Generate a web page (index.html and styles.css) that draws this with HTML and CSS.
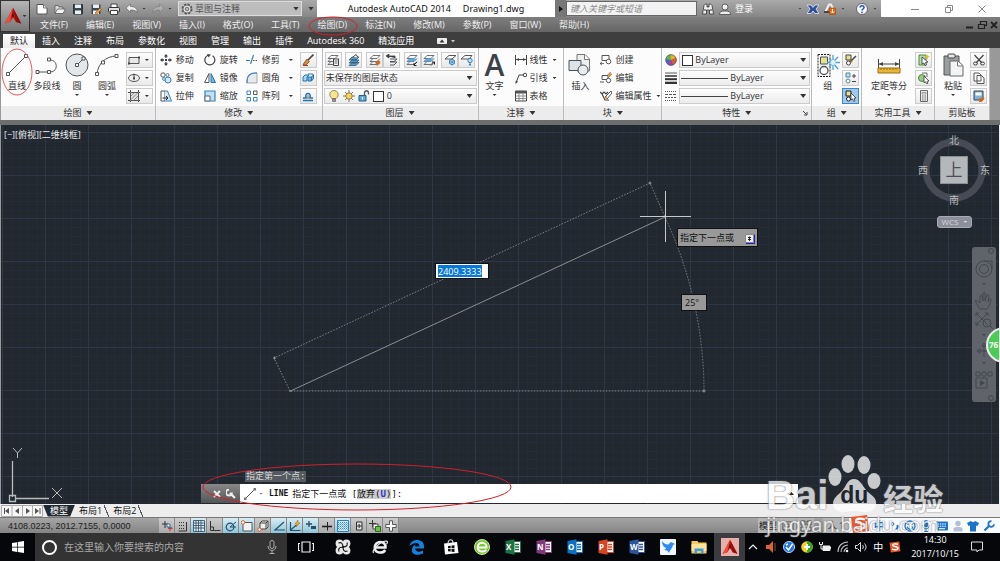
FILE: index.html
```html
<!DOCTYPE html>
<html lang="zh-CN">
<head>
<meta charset="utf-8">
<title>Autodesk AutoCAD 2014 - Drawing1.dwg</title>
<link rel="stylesheet" href="styles.css">
</head>
<body>
<svg class="defs" aria-hidden="true">
  <symbol id="doc" viewBox="0 0 12 12"><path d="M1 1.500h6.500l3.500 3.500v6h-10z" fill="#fff" stroke="#555"/><path d="M7.500 1.500v3.500h3.500" fill="#ddd" stroke="#777"/></symbol>
  <symbol id="folder" viewBox="0 0 12 12"><path d="M1 10V2.500h3l1 1.500h4v2" fill="#ddd" stroke="#555" stroke-width=".8"/><path d="M1 10.500l2.500-4.500h8l-2.500 4.500z" fill="#f4f4f4" stroke="#555" stroke-width=".8"/></symbol>
  <symbol id="disk" viewBox="0 0 12 12"><path d="M1.500 1.500h9v9.500h-9z" fill="#3c4650" stroke="#2c333b"/><path d="M3 1.500h6v3.500h-6zM3 7.500h6v3.500h-6z" fill="#eceff2"/></symbol>
  <symbol id="disk2" viewBox="0 0 12 12"><path d="M1.500 1.500h9v9.500h-9z" fill="#3c4650"/><path d="M3 1.500h6v3.500h-6zM3 7.500h6v3.500h-6z" fill="#eceff2"/><path d="M5 10l5-5 1.500 1.500-5 5z" fill="#f0a33c" stroke="#7a4a14" stroke-width=".5"/></symbol>
  <symbol id="print" viewBox="0 0 12 12"><path d="M3 1h6v4h-6z" fill="#fff" stroke="#444"/><rect x=".5" y="4.500" width="11" height="4.500" rx="1" fill="#ddd" stroke="#333"/><path d="M2.500 7.500h7v4h-7z" fill="#fff" stroke="#444"/></symbol>
  <symbol id="undo" viewBox="0 0 12 12"><path d="M0 5l4.500-4v2.500c4 0 7 2 7 6-1.500-2-4-2.500-7-2.500v2.500z" fill="#eee" stroke="#555" stroke-width=".6"/></symbol>
  <symbol id="redo" viewBox="0 0 12 12"><path d="M12 5l-4.500-4v2.500c-4 0-7 2-7 6 1.500-2 4-2.500 7-2.500v2.500z" fill="#adadad" stroke="#777" stroke-width=".6"/></symbol>
  <symbol id="gear" viewBox="0 0 12 12"><circle cx="6" cy="6" r="4.800" fill="none" stroke="#555" stroke-width="1.400" stroke-dasharray="2.300 1.470"/><circle cx="6" cy="6" r="4" fill="#e8e8e8" stroke="#555" stroke-width=".8"/><circle cx="6" cy="6" r="1.800" fill="#bbb" stroke="#555" stroke-width=".8"/></symbol>
  <symbol id="binoc" viewBox="0 0 12 12"><path d="M2 2.500l1.500-1.500h1.500v3h2v-3h1.500l1.500 1.500 1.500 8.500h-4v-4h-3v4h-4z" fill="#eee" stroke="#333" stroke-width=".8"/><path d="M2 7h2M8 7h2" stroke="#333"/></symbol>
  <symbol id="user" viewBox="0 0 12 12"><circle cx="6" cy="4" r="3" fill="#eee" stroke="#444" stroke-width=".8"/><path d="M.5 11.500c0-3 2-3.500 5.500-3.500s5.500.5 5.500 3.500z" fill="#eee" stroke="#444" stroke-width=".8"/></symbol>
  <symbol id="exch" viewBox="0 0 12 12"><path d="M0 2h4l2 2.500 2-2.500h4l-3 4 3 4.500h-4l-2-2.500-2 2.500h-4l3-4.500z" fill="#2c4f9a" stroke="#e9edf6" stroke-width=".8"/></symbol>
  <symbol id="a360" viewBox="0 0 12 12"><path d="M1 9.500l4-8h2l2 4" fill="none" stroke="#eee" stroke-width="2"/><path d="M0 9h6" stroke="#445" stroke-width="2"/><rect x="5.500" y="5" width="6" height="6.500" fill="#e26a13" stroke="#a84605" stroke-width=".6"/><path d="M8.500 6v4M7 8.500l1.500 1.500 1.500-1.500" stroke="#fff" fill="none"/></symbol>
  <symbol id="help" viewBox="0 0 12 12"><circle cx="6" cy="6" r="5.500" fill="#f5f7fb" stroke="#444" stroke-width=".7"/><path d="M4 4.500c.1-2.500 4-2.500 4 0 0 1.500-2 1.500-2 3" fill="none" stroke="#2455b5" stroke-width="1.500"/><circle cx="6" cy="9.300" r=".9" fill="#2455b5"/></symbol>

  <symbol id="line" viewBox="0 0 24 24"><path d="M3 21L21 3" stroke="#555"/><path d="M1.500 19.500h3v3h-3zM19.500 1.500h3v3h-3z" fill="#fff" stroke="#555"/></symbol>
  <symbol id="pline" viewBox="0 0 24 24"><path d="M2 19h13c9 0 8-13-1-12" fill="none" stroke="#555"/><path d="M1 17.500h3v3h-3zM12.500 17.500h3v3h-3zM12.500 5h3v3h-3z" fill="#fff" stroke="#555"/></symbol>
  <symbol id="circle" viewBox="0 0 24 24"><circle cx="12" cy="12" r="11" fill="#e4e7ea" stroke="#555"/><path d="M12 12l6-6" stroke="#555"/><path d="M10.500 10.500h3v3h-3zM17 4h3v3h-3z" fill="#fff" stroke="#555"/></symbol>
  <symbol id="arc" viewBox="0 0 24 24"><path d="M2 21C3 11 10 3 22 3" fill="none" stroke="#555"/><path d="M.5 19.500h3v3h-3zM6.500 8h3v3h-3zM20 1.500h3v3h-3z" fill="#fff" stroke="#555"/></symbol>
  <symbol id="rect" viewBox="0 0 12 12"><path d="M1 3.500h10v6h-10z" fill="#e8e8e8" stroke="#555"/><path d="M0 8.500h2v2h-2zM10 2.500h2v2h-2z" fill="#444"/></symbol>
  <symbol id="ellipse" viewBox="0 0 12 12"><ellipse cx="6" cy="6" rx="5.500" ry="3.500" fill="#eee" stroke="#555"/><path d="M6 1.500v4.500" stroke="#444"/><path d="M5 5.500h2v2h-2z" fill="#444"/></symbol>
  <symbol id="hatch" viewBox="0 0 12 12"><path d="M2.500 2.500h8v8h-8z" fill="#e2e2e2" stroke="#555"/><path d="M3 6l3-3M3 9.500l6.500-6.500M6 10l4-4" stroke="#777" stroke-width=".8"/><path d="M0 2.500h2M11 10.500h1M2.500 0v2M10.500 0v2M0 10.500h2M11 2.500h1M2.500 11v1M10.500 11v1" stroke="#444"/></symbol>

  <symbol id="move" viewBox="0 0 12 12"><path d="M6 1v3M6 8v3M1 6h3M8 6h3" stroke="#3a3f45" stroke-width="1.300"/><path d="M6 0l2 2.500h-4zM6 12l2-2.500h-4zM0 6l2.500-2v4zM12 6l-2.500-2v4zM5 5h2v2h-2z" fill="#3a3f45"/></symbol>
  <symbol id="rotate" viewBox="0 0 12 12"><path d="M4 1.300A5 5 0 1 0 8.500 1.700" fill="none" stroke="#444" stroke-width="1.200"/><path d="M3 0l4 .5-2.500 3z" fill="#444"/></symbol>
  <symbol id="trim" viewBox="0 0 12 12"><path d="M0 6.500h4M4.500 10l3-9" stroke="#3883bd" stroke-width="1.200"/><path d="M7 6.500h5" stroke="#555" stroke-dasharray="1.500 1"/></symbol>
  <symbol id="copy" viewBox="0 0 12 12"><circle cx="3" cy="3" r="2.200" fill="#fff" stroke="#555"/><circle cx="7.500" cy="3" r="1.500" fill="#fff" stroke="#777"/><circle cx="8" cy="8" r="3" fill="#d4eaf8" stroke="#3883bd"/><circle cx="4" cy="7" r="1.400" fill="#fff" stroke="#3883bd"/></symbol>
  <symbol id="mirror" viewBox="0 0 12 12"><path d="M5 1.500v9h-4.500z" fill="#fff" stroke="#555"/><path d="M7 1.500v9h4.500z" fill="#74b4e2" stroke="#2b77b3"/></symbol>
  <symbol id="fillet" viewBox="0 0 12 12"><path d="M1 11V9C1 4 4 1 9 1h2v10z" fill="#e7eaed" stroke="#888" stroke-width=".7"/><path d="M1 11V9C1 4 4 1 9 1h2" fill="none" stroke="#3883bd" stroke-width="1.200"/></symbol>
  <symbol id="stretch" viewBox="0 0 12 12"><path d="M1 1h4v10h-4z" fill="#fff" stroke="#555"/><path d="M5 1h2.500l4 10h-6.500" fill="#cfe7f7" stroke="#3883bd"/><path d="M2.500 8h5M6 6l2 2-2 2" stroke="#222" fill="none"/></symbol>
  <symbol id="scale" viewBox="0 0 12 12"><path d="M1 1h10v10h-10z" fill="#bfe0f5" stroke="#3883bd" stroke-width="1.200"/><path d="M1 6h5v5h-5z" fill="#fff" stroke="#666"/></symbol>
  <symbol id="array" viewBox="0 0 12 12"><path d="M1 1h3.500v3.500h-3.500zM1 7.500h3.500v3.500h-3.500zM7.500 7.500h3.500v3.500h-3.500z" fill="#fff" stroke="#3883bd"/><path d="M7.500 1h3.500v3.500h-3.500z" fill="#fff" stroke="#555"/></symbol>
  <symbol id="brush" viewBox="0 0 12 12"><path d="M11.500 .5L6 6" stroke="#444" stroke-width="1.600"/><path d="M5 5l2.500 2.500-3.500 3.500-3-.5z" fill="#d98a33" stroke="#7b3d12" stroke-width=".7"/><path d="M1 11.500h5" stroke="#a33"/></symbol>
  <symbol id="explode" viewBox="0 0 12 12"><path d="M1 5l2-2h4l-2 2v4h-4z" fill="#a9d6f3" stroke="#2474ad"/><path d="M6 5h3.500v4h-3.500zM9.500 5l2-2.500v4l-2 2.500M6 2h5" fill="#74b4e2" stroke="#2474ad"/></symbol>
  <symbol id="offset" viewBox="0 0 12 12"><path d="M1 10.500h10M1 8h3c-2-6 6-6 4 0h3" fill="none" stroke="#2474ad" stroke-width="1.400"/><path d="M5 8c-1-3 3-3 2 0z" fill="#fff" stroke="#444" stroke-width=".7"/></symbol>

  <symbol id="lay" viewBox="0 0 12 12"><path d="M1 4.500l3-3h7l-3 3zM1 7.500l3-3M1 7.500h7l3-3M1 10.500l3-3M1 10.500h7l3-3" fill="none" stroke="#4c535a" stroke-width=".8"/></symbol>
  <symbol id="lay-list" viewBox="0 0 12 12"><use href="#lay"/><path d="M6.500 5h5v6.500h-5z" fill="#fff" stroke="#444"/><path d="M7.500 7h3M7.500 9h3" stroke="#555"/></symbol>
  <symbol id="lay-blue" viewBox="0 0 12 12"><path d="M1 6l3-3h7l-3 3zM1 9l3-3h7l-3 3zM1 11.500l3-3h7l-3 3z" fill="#4e9fd6" stroke="#30475a" stroke-width=".7"/><path d="M5 3l3-2.500 2 3" fill="#fff" stroke="#444"/></symbol>
  <symbol id="lay-brush" viewBox="0 0 12 12"><use href="#lay"/><path d="M6 8l4-2 1.500 3-3.500 3z" fill="#c96d22"/></symbol>
  <symbol id="lay-prev" viewBox="0 0 12 12"><path d="M4 5h7l-3 2.500h-4M4 8h7l-3 3h-4" fill="none" stroke="#4c535a"/><path d="M1 2h8v2M0 2l3-2v4z" fill="#333" stroke="#444" stroke-width=".8"/></symbol>
  <symbol id="lay-iso" viewBox="0 0 12 12"><use href="#lay"/><path d="M1 7.500h7l3-3h-7z" fill="#5aaae0"/><path d="M11 8l-3 3M8 9v2.500h2.500" stroke="#222" fill="none"/></symbol>
  <symbol id="lay-uniso" viewBox="0 0 12 12"><use href="#lay"/><path d="M1 7.500h7l3-3h-7z" fill="#5aaae0"/><path d="M8 11.500l3-3M9 8h2.500v2.500" stroke="#222" fill="none"/></symbol>
  <symbol id="lay-freeze" viewBox="0 0 12 12"><path d="M1 5l4-3.500h7l-4 3.500z" fill="#fff" stroke="#555"/><circle cx="8" cy="8" r="2.600" fill="#d8edfa" stroke="#3883bd"/><path d="M8 4.500v7M5 6.500l6 3M5 9.500l6-3" stroke="#3883bd" stroke-width=".7"/></symbol>
  <symbol id="lay-off" viewBox="0 0 12 12"><path d="M0 5l4-3.500h7l-3 3.500z" fill="#fff" stroke="#555"/><circle cx="9" cy="6.500" r="2.200" fill="#b9dff7" stroke="#3883bd"/><path d="M8 9.500h2v2h-2z" fill="#3883bd"/></symbol>
  <symbol id="bulb" viewBox="0 0 12 12"><path d="M4 8.500c-4-3-2-8 2-8s6 5 2 8z" fill="#f7e68a" stroke="#77704a" stroke-width=".8"/><path d="M4.500 9h3v2.500h-3z" fill="#999" stroke="#555" stroke-width=".6"/></symbol>
  <symbol id="sun" viewBox="0 0 12 12"><path d="M6 0v12M0 6h12M2 2l8 8M2 10l8-8" stroke="#555" stroke-width=".8"/><circle cx="6" cy="6" r="3.200" fill="#f7d45a" stroke="#8a6a22" stroke-width=".8"/></symbol>
  <symbol id="lock" viewBox="0 0 12 12"><path d="M1 5.500h7v5.500h-7z" fill="#5aa9d8" stroke="#265f87"/><path d="M6.500 5.500v-2.500c0-3 4-3 4 0v1.500" fill="none" stroke="#555" stroke-width="1.300"/><path d="M4.500 7v2.500" stroke="#fff"/></symbol>

  <symbol id="linear" viewBox="0 0 12 12"><path d="M.5 1v10M11.500 1v10M1 5.500h10" stroke="#444"/><path d="M1 5.500l3-1.500v3zM11 5.500l-3-1.500v3z" fill="#444"/></symbol>
  <symbol id="leader" viewBox="0 0 12 12"><path d="M1 11l3-8h5" fill="none" stroke="#444"/><path d="M.5 12l.3-3.500 2.300 1z" fill="#444"/><circle cx="10" cy="3" r="1.800" fill="#fff" stroke="#444"/></symbol>
  <symbol id="table" viewBox="0 0 12 12"><path d="M.5 1h11v10h-11z" fill="#fff" stroke="#444"/><path d="M.5 1h11v2.500h-11z" fill="#555"/><path d="M.5 6h11M.5 8.500h11M4 3.500v7.500M8 3.500v7.500" stroke="#777" stroke-width=".8"/></symbol>
  <symbol id="insert" viewBox="0 0 24 24"><path d="M9 1.500h8l4.500 4.500v12h-12.500z" fill="#eceef0" stroke="#777"/><path d="M16.500 2v4.500h5" fill="#fff" stroke="#777"/><path d="M1 7.500h12v10h-12z" fill="#dde3e8" stroke="#4b5258"/><circle cx="15" cy="17" r="5" fill="#e9edf0" stroke="#4b5258"/></symbol>
  <symbol id="create" viewBox="0 0 12 12"><path d="M2 1.500h7v5h-7z" fill="#fff" stroke="#555"/><circle cx="8.500" cy="7.500" r="2.300" fill="#fff" stroke="#555"/><path d="M0 9.500h4M2 8l-2 1.500 2 1.500" fill="none" stroke="#555" stroke-width=".8"/></symbol>
  <symbol id="edit" viewBox="0 0 12 12"><path d="M2 3.500h6v4h-6z" fill="#fff" stroke="#555"/><circle cx="8.500" cy="8.500" r="2.200" fill="#fff" stroke="#555"/><path d="M0 10h4" stroke="#555"/><path d="M10.500 0l-3 3h2l-1 2.500 3.500-3.500h-2z" fill="#f2a63b" stroke="#a85d0c" stroke-width=".5"/></symbol>
  <symbol id="attr" viewBox="0 0 12 12"><path d="M0 2l2 2 2-2 2 2 2-2M2 4l3 6h4" fill="none" stroke="#444" stroke-width="1.200"/><path d="M5 7l6-6 1 2-5 6z" fill="#fff" stroke="#555"/><path d="M4 8l3-2v3z" fill="#e6952e"/></symbol>
  <symbol id="wheel" viewBox="0 0 12 12"><circle cx="6" cy="6" r="5.500" fill="#3a6fd0"/><path d="M6 6V.5A5.500 5.500 0 0 1 11 4z" fill="#f0b02c"/><path d="M6 6L11 4A5.500 5.500 0 0 1 8 11z" fill="#e05a2a"/><path d="M6 6l2 5a5.500 5.500 0 0 1-6-1.500z" fill="#9c45a8"/><path d="M6 6V.5A5.500 5.500 0 0 0 .8 5z" fill="#63b848"/><circle cx="6" cy="6" r="5.300" fill="none" stroke="#555" stroke-width=".6"/></symbol>
  <symbol id="weights" viewBox="0 0 12 12"><path d="M0 1h12" stroke="#333" stroke-width=".8"/><path d="M0 4h12" stroke="#333" stroke-width="1.500"/><path d="M0 7.200h12" stroke="#333" stroke-width="2"/><path d="M0 11h12" stroke="#333" stroke-width="2.600"/></symbol>
  <symbol id="dashes" viewBox="0 0 12 12"><path d="M0 1.500h12" stroke="#555" stroke-dasharray="1 1"/><path d="M0 4.500h12" stroke="#555" stroke-dasharray="3 1"/><path d="M0 7.500h12" stroke="#555" stroke-dasharray="2 1"/><path d="M0 10.500h12" stroke="#555" stroke-dasharray="1 1"/></symbol>
  <symbol id="group" viewBox="0 0 24 24"><path d="M2 1.500h12v22h-12z" fill="#f6f6f6" stroke="#222" stroke-dasharray="2 1"/><path d="M4.500 4h7v7h-7z" fill="#e9e28d" stroke="#4b5258"/><circle cx="8" cy="17.500" r="4" fill="#fff" stroke="#4b5258" stroke-width="1.300"/><path d="M17 2v5M17 12v5M11 9.500h4M19 9.500h5M13 5l3 3M18 11l4 5M13 14l3-3M18 8l4-4" stroke="#4b9fda" stroke-width="1.300"/><circle cx="17" cy="9.500" r="2.500" fill="#d9f0ff"/></symbol>
  <symbol id="gr-edit" viewBox="0 0 12 12"><path d="M1 1h5v5h-5z" fill="#e9e28d" stroke="#444"/><circle cx="3.500" cy="9" r="2" fill="#fff" stroke="#444"/><path d="M5 8l6-6" stroke="#444" stroke-width="1.500"/><path d="M4.500 9l2-2.500 1.500 1.500z" fill="#d77a20"/></symbol>
  <symbol id="gr-add" viewBox="0 0 12 12"><path d="M1 1h4v4h-4z" fill="#bde0f6" stroke="#589"/><circle cx="3" cy="9" r="2" fill="#fff" stroke="#589"/><path d="M7 4h4M9 2v4M7 9.500h4" stroke="#444"/></symbol>
  <symbol id="gr-sel" viewBox="0 0 12 12"><path d="M1 1h5v5h-5z" fill="#e9e28d" stroke="#222"/><circle cx="3.500" cy="9" r="2" fill="#fff" stroke="#222"/><path d="M6 3l5 5-2 .3 1 2.500-1.500.5-1-2.500-1.500 1.200z" fill="#fff" stroke="#222" stroke-width=".7"/></symbol>
  <symbol id="measure" viewBox="0 0 24 24"><path d="M1.500 6v10M22.500 6v10M2 11h20" stroke="#444"/><path d="M2 11l4-2v4zM22 11l-4-2v4z" fill="#444"/><path d="M1 15h22v5h-22z" fill="#e9b53a" stroke="#9b6c11"/><path d="M4 15v2M7 15v2M10 15v2M13 15v2M16 15v2M19 15v2" stroke="#9b6c11"/></symbol>
  <symbol id="u-sel" viewBox="0 0 12 12"><path d="M1 1h7v10h-7z" fill="#b9dca8" stroke="#4c8a38"/><path d="M4 3l6 5-2.500.5 1 2.500-1.500.5-1-2.500-2 1z" fill="#fff" stroke="#333" stroke-width=".8"/><path d="M9 0l1 2 2 .5-2 1-.5 2-1-2-2-1 2-.5z" fill="#f2b32f"/></symbol>
  <symbol id="u-all" viewBox="0 0 12 12"><circle cx="4" cy="6" r="3.500" fill="#9ccb88" stroke="#4c8a38"/><path d="M4 1h5v4" fill="#fff" stroke="#666"/><path d="M6 4l5 5-2 .3 1 2-1.500.5-1-2-1.500 1z" fill="#fff" stroke="#333" stroke-width=".8"/></symbol>
  <symbol id="calc" viewBox="0 0 12 12"><path d="M2.500 .5h7v11h-7z" fill="#eee" stroke="#666"/><path d="M4 2.500h4v1.500h-4z" fill="#fff" stroke="#666" stroke-width=".6"/><path d="M4 6h4M4 8h4M4 10h4" stroke="#666" stroke-dasharray="1 .5"/></symbol>
  <symbol id="paste" viewBox="0 0 24 24"><path d="M3 3h15v19h-15z" fill="#9a9da0" stroke="#555"/><rect x="7" y="1" width="7" height="4" rx="1" fill="#e5e7e9" stroke="#444"/><path d="M9 8h8l5 4.500v10.500h-13z" fill="#f2f3f4" stroke="#666"/><path d="M16.500 8.500v4.500h5" fill="#fff" stroke="#777"/></symbol>
  <symbol id="cut" viewBox="0 0 12 12"><path d="M1.500 1l7.500 8M10.500 1l-7.500 8" stroke="#444" stroke-width="1.200"/><ellipse cx="2.500" cy="9.500" rx="2" ry="1.500" fill="none" stroke="#444"/><ellipse cx="9.500" cy="9.500" rx="2" ry="1.500" fill="none" stroke="#444"/></symbol>
  <symbol id="copyclip" viewBox="0 0 12 12"><path d="M1 1h5l2 2v6h-7zM4 3.500h4.500l2.500 2.500v5.500h-7z" fill="#fff" stroke="#555"/></symbol>
  <symbol id="match" viewBox="0 0 12 12"><path d="M1 1h9v9h-9z" fill="#7fb4da" stroke="#345"/><path d="M2.500 2.500h6v3h-6z" fill="#fff"/><path d="M6 9l4-2.500 1.500 2-3 3.500h-2.500z" fill="#c96d22"/></symbol>

  <symbol id="s-infer" viewBox="0 0 12 12"><path d="M1 4h6M4 1v7M7 8h4" stroke="#333"/><path d="M6 4h3v3h-3z" fill="#fff" stroke="#2b6ea5"/><path d="M9 7v4M7.500 8.500h4" stroke="#c33"/></symbol>
  <symbol id="s-snap" viewBox="0 0 12 12"><path d="M2 2.500h5M2 5.500h5M2 8.500h5" stroke="#333" stroke-dasharray="1 1"/><path d="M9.500 2v9h-8" fill="none" stroke="#333"/></symbol>
  <symbol id="s-grid" viewBox="0 0 12 12"><path d="M.5 .5h11v11h-11z" fill="#dbe9f0"/><path d="M.5 .5h11v11h-11zM3 0v12M5.500 0v12M8 0v12M0 3h12M0 5.500h12M0 8h12" fill="none" stroke="#2f4860" stroke-width=".8"/></symbol>
  <symbol id="s-ortho" viewBox="0 0 12 12"><path d="M1.500 1v9.500h10M1.500 7h3v3" fill="none" stroke="#333"/></symbol>
  <symbol id="s-polar" viewBox="0 0 12 12"><circle cx="5" cy="7" r="3.800" fill="none" stroke="#24506e" stroke-width="1.200"/><path d="M5 7l6-5M5 7h6" stroke="#24506e"/></symbol>
  <symbol id="s-osnap" viewBox="0 0 12 12"><path d="M2 2.500h9v8.500h-9z" fill="#f2f2f2" stroke="#555"/><circle cx="2" cy="2.500" r="1.800" fill="#fff" stroke="#e0592e"/></symbol>
  <symbol id="s-3d" viewBox="0 0 12 12"><path d="M3 3l2-2h6v6l-2 2h-6z" fill="#eee" stroke="#444"/><path d="M3 3h6v6M9 3l2-2" fill="none" stroke="#444"/><circle cx="2.500" cy="9.500" r="1.600" fill="#fff" stroke="#e0592e"/></symbol>
  <symbol id="s-otrack" viewBox="0 0 12 12"><path d="M11 2L2 10h10" fill="none" stroke="#24506e" stroke-width="1.200"/></symbol>
  <symbol id="s-ducs" viewBox="0 0 12 12"><path d="M1.500 2v8.500h10M1.500 10l6-5" stroke="#24506e" fill="none" stroke-width="1.200"/><path d="M9 0l-3 4h2l-1 3 4-4h-2z" fill="#f2b32f" stroke="#a85d0c" stroke-width=".5"/></symbol>
  <symbol id="s-dyn" viewBox="0 0 12 12"><path d="M1 4h6M4 1v6" stroke="#24506e" stroke-width="1.300"/><path d="M6 6h5v3h-5z" fill="#24506e"/></symbol>
  <symbol id="s-lwt" viewBox="0 0 12 12"><path d="M1 6.500h10" stroke="#222" stroke-width="1.600"/><path d="M6.500 2v8.500" stroke="#222"/></symbol>
  <symbol id="s-tpy" viewBox="0 0 12 12"><path d="M.5 .5h11v11h-11z" fill="#cfe6f6" stroke="#2b7dbd"/><path d="M1 2.500h10M1 4.500h10M1 6.500h10M1 8.500h10" stroke="#3d8fc9" stroke-dasharray="1 1"/><path d="M2 3.500h9M2 5.500h9M2 7.500h9M2 9.500h9" stroke="#7fb6df" stroke-dasharray="1 1"/></symbol>
  <symbol id="s-qp" viewBox="0 0 12 12"><path d="M3.500 2h5.500v8h-5.500zM3.500 6h5.500M6.200 4v4" fill="#ddd" stroke="#333"/></symbol>
  <symbol id="s-sc" viewBox="0 0 12 12"><path d="M0 3.500h7M3.500 0v7" stroke="#333"/><path d="M4 4h5v5h-5z" fill="#eee" stroke="#444"/><path d="M6.500 6.500h5v5h-5z" fill="#6bbf4a" stroke="#2e6d1a"/></symbol>
  <symbol id="s-am" viewBox="0 0 12 12"><path d="M4.500 .8h3v3.700h3.700v3h-3.700v3.700h-3v-3.700h-3.700v-3h3.700z" fill="#fff" stroke="#555"/></symbol>

  <symbol id="win" viewBox="0 0 16 16"><path d="M2 4l5-.8v4.500h-5zM7.700 3l6.300-1v5.700h-6.300zM2 8.400h5v4.500l-5-.8zM7.700 8.400h6.300v5.700l-6.300-1z" fill="#fff"/></symbol>
  <symbol id="mic" viewBox="0 0 16 16"><rect x="6" y="1.500" width="4" height="8" rx="2" fill="none" stroke="#aaa"/><path d="M4 7c0 6 8 6 8 0M8 11.500v3M5.500 14.500h5" fill="none" stroke="#aaa"/></symbol>
  <symbol id="tview" viewBox="0 0 16 16"><path d="M4 3h8v10h-8zM2 4.500h-1.500v7h1.500M14 4.500h1.500v7h-1.500" fill="none" stroke="#eee" stroke-width="1.200"/></symbol>
  <symbol id="pin4" viewBox="0 0 16 16"><g fill="#e8e8e8"><circle cx="4.500" cy="4.500" r="3.900"/><circle cx="11.500" cy="4.500" r="3.900"/><circle cx="4.500" cy="11.500" r="3.900"/><circle cx="11.500" cy="11.500" r="3.900"/></g><path d="M8 8C8 4 6 3 3.500 4M8 8c4 0 5-2 4-4.500M8 8c0 4 2 5 4.500 4M8 8c-4 0-5 2-4 4.500" fill="none" stroke="#111" stroke-width="1.100"/></symbol>
  <symbol id="ie" viewBox="0 0 16 16"><path d="M2.500 8.500h11C14 1 2.500 1 2.800 8.700c.2 6 8.200 6 10.400 2.300" fill="none" stroke="currentColor" stroke-width="2.500"/><path d="M1.500 14c-2-3 7-12 13-12 1.500.5 1 2 0 3" fill="none" stroke="currentColor" stroke-width="1.200"/></symbol>
  <symbol id="edge" viewBox="0 0 16 16"><path d="M.5 7C2-1 15-1 15 7.500v2h-9c.5 3.500 5 4 8 2v3C6 18 1 14 3.500 8.500 4.200 7 5.500 6 7 5.500c-.7.700-1 1.300-1 2h4.500C10.500 3 5 3 .5 7z" fill="#1480de"/></symbol>
  <symbol id="store" viewBox="0 0 16 16"><path d="M1 4.500l13-1.500 1.500 11-13.500 1.500z" fill="#fff"/><path d="M5 5c0-5 5-6 5-.8" fill="none" stroke="#ddd" stroke-width="1.200"/><path d="M5 7l2.700-.3v2.600h-2.700zM8.500 6.600l3-.3v3h-3zM5 10h2.700v2.600l-2.700-.3zM8.500 10h3v3l-3-.3z" fill="#111"/></symbol>
  <symbol id="green" viewBox="0 0 16 16"><circle cx="8" cy="8" r="7.500" fill="#76c92c" stroke="#cfee9e"/><path d="M3.500 8.500h9C13 2 3.500 2 3.700 8.500c.3 5 7 5 8.600 2.200" fill="none" stroke="#fff" stroke-width="2"/></symbol>
  <symbol id="office" viewBox="0 0 16 16"><path d="M8 2.500h7.500v11h-7.500z" fill="#fff" stroke="currentColor"/><path d="M10 5.500h4M10 8h4M10 10.500h4" stroke="currentColor" stroke-width="1.400"/><path d="M.5 2l9-1.700v15.400l-9-1.700z" fill="currentColor"/></symbol>
  <symbol id="bird" viewBox="0 0 16 16"><rect width="16" height="16" rx="1" fill="#f2f8ff"/><path d="M2 2c3 4 6 4 7 3 1-2 3-2 4-1l2 1-2 1c-1 4-3 5-4 8-1-2-2-3-5-3 1-1 2-1 2-2-3-1-4-4-4-7z" fill="#2f8cf0"/></symbol>
  <symbol id="files" viewBox="0 0 16 16"><path d="M.5 2h6l1 1.500h8v11h-15z" fill="#f3ca5b"/><path d="M.5 5h15v7h-15z" fill="#fbe39a"/><path d="M3.500 14.500v-5h9v5h-2.500v-2.500h-4v2.500z" fill="#3d9de0"/></symbol>
  <symbol id="acad" viewBox="0 0 24 24"><path d="M12 1L1 22l7-2 4-6 4 6 7 2z" fill="#c21f16"/><path d="M12 1L8 20 1 22z" fill="#e8503c"/><path d="M12 1l4 19 7 2z" fill="#8f0f0c"/><path d="M12 6l-2 9 2-3 2 3z" fill="#5d0504"/></symbol>
</svg>

<header class="top">
  <button class="app" aria-label="应用程序菜单"><svg class="i24"><use href="#acad"/></svg><i class="dn"></i></button>
  <div class="titlebar">
    <div class="quick">
      <button aria-label="新建"><svg class="i12"><use href="#doc"/></svg></button>
      <button aria-label="打开"><svg class="i12"><use href="#folder"/></svg></button>
      <button aria-label="保存"><svg class="i12"><use href="#disk"/></svg></button>
      <button aria-label="另存为"><svg class="i12"><use href="#disk2"/></svg></button>
      <button aria-label="打印"><svg class="i12"><use href="#print"/></svg></button>
      <span class="hist"><button aria-label="放弃"><svg class="i12"><use href="#undo"/></svg></button><i class="dn"></i></span>
      <span class="hist"><button aria-label="重做"><svg class="i12"><use href="#redo"/></svg></button><i class="dn"></i></span>
      <label class="workspace"><svg class="i12"><use href="#gear"/></svg><select aria-label="工作空间"><option>草图与注释</option></select><i class="dn big"></i></label>
      <i class="dn big"></i>
    </div>
    <h1><span>Autodesk AutoCAD 2014</span><span>Drawing1.dwg</span></h1>
    <div class="info">
      <button class="play" aria-label="展开"></button>
      <input type="search" placeholder="键入关键字或短语" aria-label="搜索">
      <button aria-label="查找"><svg class="i12"><use href="#binoc"/></svg></button>
      <button class="login"><svg class="i12"><use href="#user"/></svg>登录</button>
      <i class="dn"></i>
      <button aria-label="Exchange"><svg class="i12"><use href="#exch"/></svg></button>
      <button aria-label="Autodesk 360"><svg class="i12"><use href="#a360"/></svg></button><i class="dn"></i>
      <button class="hlp" aria-label="帮助"><svg class="i12"><use href="#help"/></svg></button><i class="dn"></i>
    </div>
    <div class="winctl">
      <button aria-label="最小化"><svg class="i10" viewBox="0 0 10 10"><path d="M1 5.500h8" stroke="#888"/></svg></button>
      <button aria-label="还原"><svg class="i10" viewBox="0 0 10 10"><path d="M1.500 3.500h5v5h-5zM3.500 3.500v-2h5v5h-2" fill="none" stroke="#888"/></svg></button>
      <button aria-label="关闭"><svg class="i10" viewBox="0 0 10 10"><path d="M1.500 1.500l7 7M8.500 1.500l-7 7" stroke="#888"/></svg></button>
    </div>
  </div>
  <nav class="menu">
    <button>文件(F)</button><button>编辑(E)</button><button>视图(V)</button><button>插入(I)</button><button>格式(O)</button><button>工具(T)</button><button>绘图(D)</button><button>标注(N)</button><button>修改(M)</button><button>参数(P)</button><button>窗口(W)</button><button>帮助(H)</button>
    <svg class="mdi" viewBox="0 0 34 10"><path d="M1 7.500h7" stroke="#222" stroke-width="2"/><path d="M13.500 4.500h6v4h-6zM15.500 4v-2.500h6v4h-2" fill="none" stroke="#222" stroke-width="1.200"/><path d="M26 2l6 6M32 2l-6 6" stroke="#222" stroke-width="1.800"/></svg>
  </nav>
</header>

<nav class="tabs">
  <button class="on">默认</button><button>插入</button><button>注释</button><button>布局</button><button>参数化</button><button>视图</button><button>管理</button><button>输出</button><button>插件</button><button>Autodesk 360</button><button>精选应用</button>
  <button class="mini" aria-label="最小化功能区"><svg viewBox="0 0 20 6"><rect width="10" height="6" rx="1" fill="#eee"/><path d="M5 1.500l2.500 3h-5z" fill="#333"/><path d="M14 2h4l-2 2.500z" fill="#ccc"/></svg></button>
</nav>

<main class="ribbon">
  <section class="panel">
    <div class="body draw">
      <button class="big"><svg class="i24"><use href="#line"/></svg>直线</button>
      <button class="big"><svg class="i24"><use href="#pline"/></svg>多段线</button>
      <button class="big"><svg class="i24"><use href="#circle"/></svg>圆<i class="dn"></i></button>
      <button class="big"><svg class="i24"><use href="#arc"/></svg>圆弧<i class="dn"></i></button>
      <div class="col wide">
        <button class="box" aria-label="矩形"><svg class="i12"><use href="#rect"/></svg><i class="dn"></i></button>
        <button class="box" aria-label="椭圆"><svg class="i12"><use href="#ellipse"/></svg><i class="dn"></i></button>
        <button class="box" aria-label="图案填充"><svg class="i12"><use href="#hatch"/></svg><i class="dn"></i></button>
      </div>
    </div>
    <h2>绘图<i class="dn big"></i></h2>
  </section>
  <section class="panel">
    <div class="body modify">
      <button class="cmd"><svg class="i12"><use href="#move"/></svg>移动</button>
      <button class="cmd"><svg class="i12"><use href="#rotate"/></svg>旋转</button>
      <button class="cmd"><svg class="i12"><use href="#trim"/></svg>修剪<i class="dn"></i></button>
      <button class="box" aria-label="删除"><svg class="i12"><use href="#brush"/></svg></button>
      <button class="cmd"><svg class="i12"><use href="#copy"/></svg>复制</button>
      <button class="cmd"><svg class="i12"><use href="#mirror"/></svg>镜像</button>
      <button class="cmd"><svg class="i12"><use href="#fillet"/></svg>圆角<i class="dn"></i></button>
      <button class="box" aria-label="分解"><svg class="i12"><use href="#explode"/></svg></button>
      <button class="cmd"><svg class="i12"><use href="#stretch"/></svg>拉伸</button>
      <button class="cmd"><svg class="i12"><use href="#scale"/></svg>缩放</button>
      <button class="cmd"><svg class="i12"><use href="#array"/></svg>阵列<i class="dn"></i></button>
      <button class="box" aria-label="偏移"><svg class="i12"><use href="#offset"/></svg></button>
    </div>
    <h2>修改<i class="dn big"></i></h2>
  </section>
  <section class="panel">
    <div class="body layers">
      <div class="lrow">
        <button class="box" aria-label="图层特性"><svg class="i12"><use href="#lay-list"/></svg></button>
        <button class="box" aria-label="置为当前"><svg class="i12"><use href="#lay-blue"/></svg></button>
        <span class="pair"><button class="box" aria-label="匹配图层"><svg class="i12"><use href="#lay-brush"/></svg></button><button class="box" aria-label="上一个"><svg class="i12"><use href="#lay-prev"/></svg></button></span>
        <span class="pair"><button class="box" aria-label="隔离"><svg class="i12"><use href="#lay-iso"/></svg></button><button class="box" aria-label="取消隔离"><svg class="i12"><use href="#lay-uniso"/></svg></button></span>
        <span class="pair"><button class="box" aria-label="冻结"><svg class="i12"><use href="#lay-freeze"/></svg></button><button class="box" aria-label="关闭图层"><svg class="i12"><use href="#lay-off"/></svg></button></span>
      </div>
      <label class="sel"><select aria-label="图层状态"><option>未保存的图层状态</option></select><i class="dn big"></i></label>
      <label class="sel"><svg class="i12"><use href="#bulb"/></svg><svg class="i12"><use href="#sun"/></svg><svg class="i12"><use href="#lock"/></svg><i class="sw"></i><select aria-label="图层"><option>0</option></select><i class="dn big"></i></label>
    </div>
    <h2>图层<i class="dn big"></i></h2>
  </section>
  <section class="panel">
    <div class="body">
      <button class="big"><span class="bigA">A</span>文字<i class="dn"></i></button>
      <div class="col list">
        <button class="cmd"><svg class="i12"><use href="#linear"/></svg>线性<i class="dn"></i></button>
        <button class="cmd"><svg class="i12"><use href="#leader"/></svg>引线<i class="dn"></i></button>
        <button class="cmd"><svg class="i12"><use href="#table"/></svg>表格</button>
      </div>
    </div>
    <h2>注释<i class="dn big"></i></h2>
  </section>
  <section class="panel">
    <div class="body">
      <button class="big"><svg class="i24"><use href="#insert"/></svg>插入</button>
      <div class="col list">
        <button class="cmd"><svg class="i12"><use href="#create"/></svg>创建</button>
        <button class="cmd"><svg class="i12"><use href="#edit"/></svg>编辑</button>
        <button class="cmd"><svg class="i12"><use href="#attr"/></svg>编辑属性<i class="dn"></i></button>
      </div>
    </div>
    <h2>块<i class="dn big"></i></h2>
  </section>
  <section class="panel">
    <div class="body props">
      <svg class="i12"><use href="#wheel"/></svg><label class="sel"><i class="sw"></i><select aria-label="颜色"><option>ByLayer</option></select><i class="dn big"></i></label>
      <svg class="i12"><use href="#weights"/></svg><label class="sel"><i class="ln"></i><select aria-label="线宽"><option>ByLayer</option></select><i class="dn big"></i></label>
      <svg class="i12"><use href="#dashes"/></svg><label class="sel"><i class="ln"></i><select aria-label="线型"><option>ByLayer</option></select><i class="dn big"></i></label>
    </div>
    <h2>特性<i class="dn big"></i><svg class="corner" viewBox="0 0 6 6"><path d="M1 1l3.500 3.500M5 2v3h-3" fill="none" stroke="#444"/></svg></h2>
  </section>
  <section class="panel">
    <div class="body ends">
      <button class="big"><svg class="i24"><use href="#group"/></svg>组</button>
      <div class="col">
        <button class="box" aria-label="编辑组"><svg class="i12"><use href="#gr-edit"/></svg></button>
        <button class="box" aria-label="添加到组"><svg class="i12"><use href="#gr-add"/></svg></button>
        <button class="box sel-on" aria-label="组选择"><svg class="i12"><use href="#gr-sel"/></svg></button>
      </div>
    </div>
    <h2>组<i class="dn big"></i></h2>
  </section>
  <section class="panel">
    <div class="body ends">
      <button class="big"><svg class="i24"><use href="#measure"/></svg>定距等分<i class="dn"></i></button>
      <div class="col">
        <button class="box" aria-label="快速选择"><svg class="i12"><use href="#u-sel"/></svg></button>
        <button class="box" aria-label="全部选择"><svg class="i12"><use href="#u-all"/></svg></button>
        <button class="box" aria-label="计算器"><svg class="i12"><use href="#calc"/></svg></button>
      </div>
    </div>
    <h2>实用工具<i class="dn big"></i></h2>
  </section>
  <section class="panel">
    <div class="body ends">
      <button class="big"><svg class="i24"><use href="#paste"/></svg>粘贴<i class="dn"></i></button>
      <div class="col">
        <button class="box" aria-label="剪切"><svg class="i12"><use href="#cut"/></svg></button>
        <button class="box" aria-label="复制"><svg class="i12"><use href="#copyclip"/></svg></button>
        <button class="box" aria-label="特性匹配"><svg class="i12"><use href="#match"/></svg></button>
      </div>
    </div>
    <h2>剪贴板</h2>
  </section>
</main>

<section class="canvas">
  <svg class="drawing">
    <defs>
      <pattern id="grid" width="43" height="43" x="2" y="7" patternUnits="userSpaceOnUse">
        <path d="M9.500 0v43M18.500 0v43M26.500 0v43M35.500 0v43M0 9.500h43M0 18.500h43M0 26.500h43M0 35.500h43" stroke="#252c36"/>
        <path d="M.5 0v43M0 .5h43" stroke="#2e3747"/>
      </pattern>
    </defs>
    <rect width="100%" height="100%" fill="url(#grid)"/>
    <g transform="translate(0 -125)" fill="none">
      <path d="M290.500 391L665 217" stroke="#8b8f94"/>
      <path d="M290 391L274 358L650 183L665 217A414 414 0 0 1 704 391H290" stroke="#888c91" stroke-dasharray="1.500 1.500" stroke-width=".9"/>
      <path d="M273 358h3M274.500 356.500v3M648.500 183h3M650 181.500v3M702.500 391h3M704 389.500v3M289 391h3" stroke="#999"/>
      <path d="M640 216.500h51M665.500 191v51" stroke="#c9cacb"/>
    </g>
  </svg>
  <span class="view">[−][俯视][二维线框]</span>
  <input class="dist" value="2409.3333" aria-label="距离">
  <div class="tip">指定下一点或<svg class="i10" viewBox="0 0 10 10"><path d="M.5 .5h8v8h-8z" fill="#eee" stroke="#888"/><path d="M1 9.500h8.500v-9" fill="none" stroke="#2020c0"/><path d="M4.500 2.500v4M3 5l1.500 1.500 1.500-1.500M3 3.500h3" stroke="#222" fill="none"/></svg></div>
  <div class="angle">25°</div>
  <div class="cube"><svg viewBox="0 0 64 64"><circle cx="32" cy="32" r="28" fill="none" stroke="#464b55" stroke-width="7"/></svg><b class="n">北</b><b class="w">西</b><b class="e">东</b><b class="s">南</b><button>上</button></div>
  <button class="wcs">WCS<i class="dn"></i></button>
  <div class="navbar">
    <svg viewBox="0 0 24 155"><g fill="none" stroke="#42474f"><circle cx="19" cy="4" r="2.500"/><circle cx="12" cy="22" r="8"/><circle cx="12" cy="22" r="4.500"/><path d="M12 14h8v8"/><path d="M8 62c-3-5-6-9-4-9l4 3v-7c1-2 2-1 2 0l1 5v-8c1-1 2-1 2 0v8l2-6c1-1 2 0 2 1l-1 6 2-3c2 0 1 2-1 7l-2 3z"/><path d="M4 66l12 12M16 66L4 78M4 69v-3h3M13 66h3v3M4 75v3h3"/><circle cx="15" cy="76" r="4"/><path d="M18 79l3 3M7 104h14M12 98v12M5 104l3-2v4zM12 96l-2 3h4z"/><path d="M4 125h4v4h-4zM10 125h4v4h-4zM16 125h4v4h-4zM4 131h11v10h-11z"/><circle cx="19" cy="151" r="2.500"/></g><path d="M8 133l5 3-5 3zM10 36h4l-2 2zM10 87h4l-2 2zM10 115h4l-2 2z" fill="#42474f"/></svg>
  </div>
  <div class="ball">76</div>
  <div class="history">指定第一个点:</div>
  <svg class="ucs" viewBox="0 0 60 60"><path d="M8.500 52V16M12 53.500h33" stroke="#b8babc" stroke-width="1.300"/><path d="M5.500 50.500h6v6h-6z" fill="none" stroke="#b8babc" stroke-width="1.300"/><path d="M9 3l4.500 5 4.500-5M13.500 8v5M48 43l10 10M58 43l-10 10" fill="none" stroke="#b8babc"/></svg>
  <div class="cmdline">
    <span class="grip"></span>
    <button aria-label="关闭"><svg class="i10" viewBox="0 0 10 10"><path d="M2 2l6 6M8 2l-6 6" stroke="#eee" stroke-width="1.800"/></svg></button>
    <button aria-label="自定义"><svg class="i10" viewBox="0 0 10 10"><path d="M4 4l5 5" stroke="#eee" stroke-width="2.200"/><path d="M3 .5a3 3 0 1 0 3 3" fill="none" stroke="#eee" stroke-width="1.800"/></svg></button>
    <div class="prompt"><svg class="i12" viewBox="0 0 12 12"><path d="M1.500 10.500l9-9" stroke="#555"/><path d="M0 9.500h2.500v2.500h-2.500zM9.500 0h2.500v2.500h-2.500z" fill="#777"/></svg><i class="dn"></i><b>LINE</b><span>指定下一点或 [<mark>放弃(<b>U</b>)</mark>]:</span><i class="up"></i></div>
  </div>
</section>

<nav class="layouts">
  <svg viewBox="0 0 42 12"><path d="M.5 .5h41v11h-41zM11 .5v11M21.500 .5v11M31.500 .5v11" fill="#f7f7f7" stroke="#aaa"/><path d="M8 3v6l-4-3zM18 3v6l-4-3zM25 3v6l4-3zM34 3v6l4-3z" fill="#555"/><path d="M3.500 3v6M39 3v6" stroke="#555"/></svg>
  <button class="on">模型</button><button>布局1</button><i class="slash"></i><button>布局2</button><i class="slash"></i>
</nav>

<div class="status">
  <output>4108.0223, 2012.7155, 0.0000</output>
  <div class="toggles">
    <button aria-label="推断约束"><svg class="i12"><use href="#s-infer"/></svg></button>
    <button aria-label="捕捉"><svg class="i12"><use href="#s-snap"/></svg></button>
    <button class="on" aria-label="栅格"><svg class="i12"><use href="#s-grid"/></svg></button>
    <button aria-label="正交"><svg class="i12"><use href="#s-ortho"/></svg></button>
    <button class="on" aria-label="极轴"><svg class="i12"><use href="#s-polar"/></svg></button>
    <button class="on" aria-label="对象捕捉"><svg class="i12"><use href="#s-osnap"/></svg></button>
    <button aria-label="三维对象捕捉"><svg class="i12"><use href="#s-3d"/></svg></button>
    <button class="on" aria-label="对象追踪"><svg class="i12"><use href="#s-otrack"/></svg></button>
    <button class="on" aria-label="动态UCS"><svg class="i12"><use href="#s-ducs"/></svg></button>
    <button class="on" aria-label="动态输入"><svg class="i12"><use href="#s-dyn"/></svg></button>
    <button aria-label="线宽"><svg class="i12"><use href="#s-lwt"/></svg></button>
    <button class="on" aria-label="透明度"><svg class="i12"><use href="#s-tpy"/></svg></button>
    <button aria-label="快捷特性"><svg class="i12"><use href="#s-qp"/></svg></button>
    <button aria-label="选择循环"><svg class="i12"><use href="#s-sc"/></svg></button>
    <button aria-label="注释监视器"><svg class="i12"><use href="#s-am"/></svg></button>
  </div>
  <div class="sright"><button>模型</button><button aria-label="快速查看布局"><svg class="i12" viewBox="0 0 12 12"><path d="M1 2h10v8h-10zM3 4h4v3h-4z" fill="#ddd" stroke="#444"/></svg></button><button aria-label="快速查看图形"><svg class="i12" viewBox="0 0 12 12"><path d="M1 1h4v4h-4zM7 1h4v4h-4zM1 7h4v4h-4zM7 7h4v4h-4z" fill="#ddd" stroke="#444"/></svg></button><button>人 1</button></div>
  <div class="ime">
    <svg viewBox="0 0 20 20" class="sg"><path d="M1 3l16-2 2 16-16 2z" fill="#f0552b"/><path d="M15 5.500c-4-1.500-9-1-9 1.500 0 3 9 1.500 9 5 0 3-6 3-10 1.500" fill="none" stroke="#fff" stroke-width="2.400"/></svg>
    <b>中</b>
    <svg class="i12" viewBox="0 0 12 12"><circle cx="3.500" cy="4" r="1.400" fill="none" stroke="#1c74c8"/><path d="M8.500 5v2.500l-1.500 2.500" stroke="#1c74c8" stroke-width="1.800" fill="none"/></svg>
    <svg class="i12" viewBox="0 0 12 12"><circle cx="6" cy="6" r="5" fill="none" stroke="#1c74c8" stroke-width="1.300"/><path d="M3 6.500c1 3.500 5 3.500 6 0M4 3.500v1.500M8 3.500v1.500" fill="none" stroke="#1c74c8" stroke-width="1.200"/></svg>
    <svg class="i12" viewBox="0 0 12 12"><rect x="4" y="0" width="4" height="7.500" rx="2" fill="#1c74c8"/><path d="M2.500 5c0 5 7 5 7 0M6 9v2M4 11.500h4" fill="none" stroke="#1c74c8"/></svg>
    <svg class="i12" viewBox="0 0 12 12"><rect y="1.500" width="12" height="9" rx="1" fill="#1c74c8"/><path d="M1.500 4h9M1.500 6.200h9" stroke="#fff" stroke-dasharray="1.500 .8"/><path d="M3 8.700h6" stroke="#fff"/></svg>
    <svg class="i12" viewBox="0 0 12 12"><circle cx="6" cy="3.500" r="2.700" fill="#b4bfd8"/><path d="M1.500 11.500v-3c0-2 9-2 9 0v3z" fill="#b4bfd8"/></svg>
    <svg class="i12" viewBox="0 0 12 12"><path d="M0 3l4-2c1 1.500 3 1.500 4 0l4 2-1.500 3-1.500-.5v6h-6v-6l-1.500.5z" fill="#1c74c8"/></svg>
    <svg class="i12" viewBox="0 0 12 12"><path d="M1.500 10.500l5-5" stroke="#1c74c8" stroke-width="2.200"/><path d="M8.500 1.200a2.800 2.800 0 1 0 2.500 3" fill="none" stroke="#1c74c8" stroke-width="1.800"/></svg>
  </div>
</div>

<footer class="taskbar">
  <button class="start" aria-label="开始"><svg class="i16"><use href="#win"/></svg></button>
  <label class="cortana"><i class="ring"></i><input type="text" placeholder="在这里输入你要搜索的内容" aria-label="搜索"><svg class="i16"><use href="#mic"/></svg></label>
  <div class="pins">
    <button aria-label="任务视图"><svg class="i16"><use href="#tview"/></svg></button>
    <button aria-label="四叶"><svg class="i16"><use href="#pin4"/></svg></button>
    <button class="white" aria-label="Internet Explorer"><svg class="i16"><use href="#ie"/></svg></button>
    <button aria-label="Edge"><svg class="i16"><use href="#edge"/></svg></button>
  </div>
  <div class="apps">
    <button aria-label="应用商店"><svg class="i16"><use href="#store"/></svg></button>
    <button aria-label="浏览器"><svg class="i16"><use href="#green"/></svg></button>
    <button class="xl"><svg class="i16"><use href="#office"/></svg><b>X</b></button>
    <button class="on1"><svg class="i16"><use href="#office"/></svg><b>N</b></button>
    <button class="ol"><svg class="i16"><use href="#office"/></svg><b>O</b></button>
    <button class="pp"><svg class="i16"><use href="#office"/></svg><b>P</b></button>
    <button class="wd"><svg class="i16"><use href="#office"/></svg><b>W</b></button>
    <button aria-label="迅雷"><svg class="i16"><use href="#bird"/></svg></button>
    <button aria-label="资源管理器"><svg class="i16"><use href="#files"/></svg></button>
    <button class="cur" aria-label="AutoCAD"><span><svg class="i16"><use href="#acad"/></svg></span></button>
  </div>
  <div class="tray">
    <svg class="i12" viewBox="0 0 12 12"><path d="M2 8l4-4 4 4" fill="none" stroke="#eee" stroke-width="1.200"/></svg>
    <svg class="i12" viewBox="0 0 12 12"><path d="M1 4h3l4-4v12l-4-4h-3z" fill="#d9623a"/><path d="M10 2v8" stroke="#752" /></svg>
    <svg class="i12" viewBox="0 0 12 12"><circle cx="6" cy="6" r="5.500" fill="#1e74d8" stroke="#b9d9ff"/><path d="M3 6l2.500 3 4-6M3 4l2-1" fill="none" stroke="#fff" stroke-width="1.500"/></svg>
    <svg class="i12" viewBox="0 0 12 12"><circle cx="6" cy="6" r="5.800" fill="#f3d21c"/><path d="M6 .2a5.800 5.800 0 0 1 0 11.600z" fill="#36a52a"/><path d="M6 3v6M3 6h6" stroke="#fff" stroke-width="2"/></svg>
    <svg class="i12" viewBox="0 0 12 12"><path d="M4 5h7v4.500h-7zM11 6.500h1v1.500" fill="#eee" stroke="#eee"/><path d="M.5 1v2.500h3v-2.500M2 4v4h2" fill="none" stroke="#eee"/></svg>
    <svg class="i12" viewBox="0 0 12 12"><path d="M1 11C1 5 5 1 11 1M4 11c0-4 3-7 7-7M7 11c0-2 2-4 4-4" fill="none" stroke="#bbb" stroke-width="1.100"/><circle cx="10" cy="10" r="1.300" fill="#eee"/></svg>
    <svg class="i12" viewBox="0 0 12 12"><path d="M.5 4.500h2l3-3v9l-3-3h-2z" fill="none" stroke="#ddd"/><path d="M7.500 4c1 1 1 3 0 4M9.500 2.500c2 2 2 5 0 7" fill="none" stroke="#ddd"/></svg>
    <span>中</span>
    <svg class="i12" viewBox="0 0 20 20"><path d="M1 3l16-2 2 16-16 2z" fill="#f0552b"/><path d="M15 5.500c-4-1.500-9-1-9 1.500 0 3 9 1.500 9 5 0 3-6 3-10 1.500" fill="none" stroke="#fff" stroke-width="2.400"/></svg>
    <time><span>14:30</span><span>2017/10/15</span></time>
    <svg class="i12" viewBox="0 0 12 12"><path d="M.5 1h11v8h-3.500l-2 2v-2h-5.500z" fill="none" stroke="#ddd"/></svg>
  </div>
</footer>

<svg class="marks" aria-hidden="true"><g fill="none" stroke="#d0202a"><ellipse cx="333" cy="26" rx="24" ry="9"/><ellipse cx="17" cy="72" rx="15" ry="23" stroke="#ee5560"/><ellipse cx="357" cy="487" rx="154" ry="23"/></g></svg>
<div class="mark">
  <div class="logo"><b>Bai</b><span class="paw"><svg viewBox="0 0 54 58"><g fill="#fff"><ellipse cx="7" cy="22" rx="6.500" ry="9"/><ellipse cx="20" cy="9" rx="6.500" ry="9"/><ellipse cx="36" cy="10" rx="6.500" ry="9"/><ellipse cx="46" cy="26" rx="6.500" ry="8"/><path d="M26 24c6 0 8 6 12 11s11 7 10 14-6 8-11 8-7-1-11-1-7 1-11 1-10-2-10-8 5-9 9-13 5-12 12-12z"/></g></svg><b>du</b></span><b class="jy">经验</b></div>
  <div class="url">jingyan.baidu.com</div>
</div>
</body>
</html>
```
FILE: styles.css
```css
* { box-sizing: border-box; }
body {
  margin: 0; min-height: 100vh; position: relative; overflow: hidden;
  display: flex; flex-direction: column;
  font: 9px/12px "Open Sans", "Noto Sans CJK SC", sans-serif;
  color: #333; background: #777;
}
button, input, select {
  font: inherit; color: inherit; border: 0; padding: 0; margin: 0; background: none; border-radius: 0;
  appearance: none; outline: 0; min-width: 0; white-space: nowrap;
}
button { display: flex; align-items: center; justify-content: center; }
h1, h2 { margin: 0; font-weight: 400; }
svg { display: block; flex: none; }
.defs { position: absolute; width: 0; height: 0; }
.i10 { width: 10px; height: 10px; }
.i12 { width: 12px; height: 12px; }
.i16 { width: 16px; height: 16px; }
.i24 { width: 24px; height: 24px; }
.dn { flex: none; width: 4px; height: 2px; background: currentColor; clip-path: polygon(0 0, 100% 0, 50% 100%); }
.dn.big { width: 6px; height: 4px; }

/* title and menus */
.top { display: grid; grid-template-columns: 30px 1fr; grid-template-rows: 17px 15px; background: linear-gradient(#999, #666); }
.app { grid-row: 1 / 3; background: linear-gradient(#b5b5b5, #777); border: 1px solid #333; gap: 1px; }
.app .i24 { width: 18px; height: 24px; }
.titlebar { display: flex; background: #fff; }
.quick { flex: 0 0 287px; display: flex; align-items: center; gap: 6px; padding-left: 6px; background: linear-gradient(#aaa, #868686); color: #333; }
.hist { display: flex; align-items: center; gap: 4px; }
.workspace { flex: 1; display: flex; align-items: center; gap: 2px; height: 15px; padding: 0 2px; background: #bdbdbd; border: 1px solid #ddd; }
.workspace select { flex: 1; color: #555; }
.quick > .dn.big { margin-right: 3px; }
.titlebar h1 { flex: 1; display: flex; justify-content: center; gap: 12px; font: 9px/17px "Noto Sans", sans-serif; color: #111; white-space: nowrap; }
.info { flex: 0 0 326px; display: flex; align-items: center; gap: 5px; background: linear-gradient(#aaa, #868686); color: #fff; padding-right: 4px; }
.info .dn { color: #444; }
.play { width: 11px; height: 17px; background: #777; margin-right: -5px; }
.play::before { content: ""; border: 3px solid transparent; border-left: 4px solid #111; margin-left: 3px; }
.info input { width: 131px; height: 15px; padding-left: 3px; background: #f2f2f2; border: 1px solid #666; font-style: italic; color: #333; }
.info input::placeholder { color: #888; opacity: 1; }
.login { gap: 4px; margin-right: auto; }
.hlp { margin-left: 6px; }
.winctl { flex: 0 0 119px; display: flex; justify-content: space-between; align-items: center; padding: 0 13px 0 29px; }
.menu { display: flex; align-items: center; gap: 18px; padding-left: 10px; color: #eee; }
.mdi { width: 34px; height: 10px; margin-left: auto; margin-right: 1px; }

.tabs { display: flex; align-items: flex-end; height: 16px; padding-left: 3px; background: #3e3e3e; color: #fff; }
.tabs button { height: 14px; padding: 0 7px; }
.tabs .on { background: linear-gradient(#fff, #ececec); color: #222; }
.tabs .mini { padding-left: 16px; }
.mini svg { width: 20px; height: 6px; }

/* ribbon */
.ribbon { display: grid; grid-template-columns: 155fr 167fr 156fr 86fr 98fr 150fr 50fr 73fr 55fr 10fr; height: 77px; background: #999; border-bottom: 5px solid #6d6f6e; padding-left: 1px; }
.panel { display: flex; flex-direction: column; background: #fcfcfc; border-right: 1px solid #bbb; min-width: 0; }
.body { flex: 1; display: flex; padding: 4px 2px 0 1px; }
.panel h2 { position: relative; display: flex; align-items: center; justify-content: center; gap: 5px; height: 14px; font-size: 9px; background: #ececec; }
.corner { position: absolute; right: 3px; top: 4px; width: 6px; height: 6px; }
.big:not(.dn) { flex-direction: column; justify-content: flex-start; flex: none; width: 30px; height: 50px; }
.big .i24 { margin: 1px 0 3px; }
.big .dn { margin-top: 2px; }
.bigA { font: 600 30px/24px "Open Sans", sans-serif; margin: 1px 0 3px; color: #3d4248; }
.col { display: grid; grid-template-rows: repeat(3, 16px); gap: 2px; align-content: start; width: 17px; }
.col.wide { width: 27px; margin-left: auto; }
.box { height: 16px; background: linear-gradient(#fdfdfd, #e9e9e9); border: 1px solid #ccc; }
.wide .box { justify-content: space-between; padding: 0 3px 0 1px; }
.cmd { gap: 4px; height: 16px; justify-content: flex-start; }
.cmd .dn { margin-left: 5px; }
.col.list { flex: 1; padding-left: 5px; }
.list .cmd { gap: 3px; }
.list .cmd .dn { margin-left: 2px; }
.body.modify { display: grid; grid-template-columns: 44px 42px 1fr 17px; grid-auto-rows: 16px; gap: 2px 0; padding: 4px 5px 0 4px; align-content: start; }
.body.layers { flex-direction: column; gap: 2px; padding: 4px 1px 0; }
.lrow { display: flex; justify-content: space-between; padding: 0 1px; }
.lrow .box { width: 17px; }
.pair { display: flex; }
.sel { display: flex; align-items: center; gap: 3px; height: 16px; padding: 0 3px 0 3px; background: linear-gradient(#fdfdfd, #ececec); border: 1px solid #ccc; }
.layers .sel:nth-child(2) { padding-left: 1px; }
.sel select { flex: 1; }
.sel select option, .workspace option { color: #333; }
.sw { width: 11px; height: 11px; border: 1px solid #333; background: #fff; }
.ln { width: 47px; height: 1px; background: #444; margin-left: -1px; }
.body.props { display: grid; grid-template-columns: 12px 1fr; grid-auto-rows: 16px; gap: 2px; align-items: center; align-content: start; padding: 4px 1px 0 3px; }
.props .sel { padding-left: 2px; gap: 2px; }
.ends { justify-content: space-between; }
.ends .big:not(.dn) { flex: 1; }
.sel-on { background: #9fcaf0; border-color: #3f86c6; }

/* drawing area */
.canvas { flex: 1; position: relative; background: #212830; border-left: 1px solid #999; border-right: 1px solid #eee; overflow: hidden; }
.drawing { position: absolute; left: -1px; top: 0; width: 100%; height: 100%; }
.view { position: absolute; left: 3px; top: 4px; color: #eee; }
.dist { position: absolute; left: 434px; top: 138px; width: 54px; height: 16px; background: linear-gradient(#0a78d6, #0a78d6) 2px 1px / 44px 12px no-repeat #fff; border: 1px solid #111; padding-left: 2px; color: #fff; }
.tip, .angle { position: absolute; background: #999; border: 1px solid #111; color: #111; display: flex; align-items: center; }
.tip { left: 676px; top: 103px; width: 81px; height: 19px; padding: 0 2px; justify-content: space-between; }
.tip svg { margin-top: 2px; }
.angle { left: 680px; top: 169px; width: 26px; height: 17px; padding-left: 3px; }
.cube { position: absolute; right: 13px; top: 13px; width: 64px; height: 64px; display: grid; place-items: center; }
.cube > * { grid-area: 1 / 1; }
.cube svg { width: 64px; height: 64px; }
.cube b { position: absolute; font-weight: 400; font-size: 10px; color: #bbb; }
.cube .n { top: -4px; }
.cube .s { bottom: -4px; }
.cube .w { left: -4px; }
.cube .e { right: -4px; }
.cube button { width: 28px; height: 28px; background: #b4b8bb; border: 1px solid #8d9092; font-size: 17px; line-height: 20px; color: #4b5055; }
.wcs { position: absolute; right: 27px; top: 91px; width: 35px; height: 12px; gap: 5px; background: #8d909c; border: 1px solid #a8aab4; border-radius: 3px; color: #d5d6de; font-size: 8px; }
.navbar { position: absolute; right: 3px; top: 122px; width: 24px; height: 155px; background: #60646a; border-radius: 3px; }
.navbar svg { width: 24px; height: 155px; }
.ball { position: absolute; right: -23px; top: 202px; width: 36px; height: 36px; border-radius: 50%; background: #4ccb58; border: 2px solid #eee; color: #fff; font: bold 8px/32px "Open Sans", sans-serif; padding-left: 1px; }
.history { position: absolute; left: 244px; bottom: 22px; height: 11px; padding: 0 1px; background: #555a60; color: #d8d8d8; font: 9px/11px "DejaVu Sans Mono", "Noto Sans CJK SC", monospace; }
.ucs { position: absolute; left: 3px; bottom: -1px; width: 60px; height: 60px; }
.cmdline { position: absolute; left: 200px; right: 201px; bottom: 1px; height: 19px; display: flex; align-items: center; gap: 4px; background: linear-gradient(#888, #555); }
.grip { width: 4px; height: 14px; margin-left: 3px; background: radial-gradient(circle, #ccc 35%, transparent 40%) 0 0 / 2px 2px; }
.prompt { flex: 1; height: 19px; display: flex; align-items: center; gap: 3px; padding: 0 4px; background: #fff; color: #111; font-family: "DejaVu Sans Mono", "Noto Sans CJK SC", monospace; white-space: nowrap; }
.prompt .dn { color: #666; }
.prompt > b { margin: 0 1px 0 3px; font-size: 8px; }
.prompt mark { background: #ccc; color: inherit; }
.prompt mark b { color: #3030d0; }
.up { margin-left: auto; width: 5px; height: 3px; background: #222; clip-path: polygon(50% 0, 100% 100%, 0 100%); }

.layouts { display: flex; align-items: center; height: 13px; padding-left: 1px; background: #ededed; }
.layouts svg { width: 42px; height: 12px; }
.layouts button { height: 12px; padding: 0 2px 0 4px; color: #111; }
.layouts .on { background: #212830; color: #fff; padding: 0 7px; clip-path: polygon(0 0, 100% 0, 85% 100%, 15% 100%); }
.slash { width: 5px; height: 12px; background: linear-gradient(to bottom right, transparent 44%, #555 46%, #555 56%, transparent 58%); transform: scaleX(-1); }

.status { display: flex; height: 16px; background: linear-gradient(#a5a5a5, #848484); border-top: 1px solid #777; }
.status output { width: 159px; padding-left: 8px; font: 9px/16px "Liberation Sans", sans-serif; color: #222; }
.toggles { display: flex; }
.toggles button { width: 16px; background: linear-gradient(#ccc, #aaa); border-right: 1px solid #888; }
.toggles .on { background: linear-gradient(#d8edf3, #8ec5d8); }
.sright { margin-left: auto; display: flex; gap: 1px; color: #222; }
.sright button { background: #b5b5b5; min-width: 17px; padding: 0 1px; }
.sright button:last-child { margin-left: 8px; width: 26px; }
.ime { flex: 0 0 151px; display: flex; align-items: center; justify-content: space-between; padding: 0 5px 0 1px; background: #f8fbff; }
.ime .sg { width: 20px; height: 20px; margin-top: -4px; }
.ime b { color: #1c74c8; font-size: 11px; }

.taskbar { display: flex; height: 28px; background: #05070b; color: #fff; }
.start { width: 35px; }
.cortana { flex: 0 0 252px; display: flex; align-items: center; background: #333; padding: 0 7px; }
.ring { width: 15px; height: 15px; border: 2px solid #fff; border-radius: 50%; }
.cortana input { flex: 1; margin-left: 7px; font-size: 10px; }
.cortana input::placeholder { color: #aaa; opacity: 1; }
.pins, .apps { display: flex; }
.pins button { width: 37px; }
.apps button { width: 31px; position: relative; }
.white { color: #eee; }
.apps b { position: absolute; left: 9px; font-size: 8px; line-height: 12px; color: #fff; }
.xl { color: #1c7444; } .on1 { color: #80397b; } .ol { color: #0a72c6; } .pp { color: #d24625; } .wd { color: #2b579a; }
.apps .cur { background: #3a3c40; }
.cur span { background: #e6b1ad; padding: 1px; }
.tray { margin-left: auto; display: flex; align-items: center; gap: 6px; padding-right: 17px; font-size: 10px; }
.tray time { display: flex; flex-direction: column; align-items: center; line-height: 14px; font-size: 9px; margin: 0 6px 0 4px; }

/* overlays */
.marks { position: absolute; inset: 0; width: 100%; height: 100%; pointer-events: none; }
.mark { position: absolute; right: 52px; bottom: 24px; width: 182px; color: #fff; opacity: .75; pointer-events: none; text-shadow: 0 0 1px #555, 0 0 2px #777; }
.logo { display: flex; align-items: flex-end; height: 58px; }
.logo > b { font: bold 40px/36px "Liberation Sans", sans-serif; }
.paw { position: relative; width: 54px; height: 58px; }
.paw svg { width: 54px; height: 58px; }
.paw b { position: absolute; left: 12px; bottom: 6px; font: bold 23px/23px "Liberation Sans", sans-serif; color: #1c232b; text-shadow: none; }
.logo .jy { font: bold 30px/32px "Noto Sans CJK SC", sans-serif; margin-left: 1px; }
.url { font: 20px/24px "Noto Sans", sans-serif; white-space: nowrap; }
```
